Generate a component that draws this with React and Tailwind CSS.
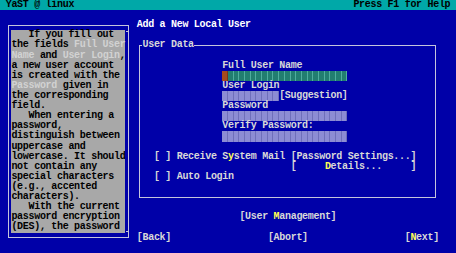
import React from "react";

function Field({ n, kind, cursor }) {
  const cells = Array.from({ length: n });
  return (
    <div className="flex h-[10.12px]">
      {cells.map((_, i) => {
        if (cursor && i === 0)
          return <span key={i} className="block w-[5.7px] h-full bg-[#a44a1c] border-r border-[#7a3414]" />;
        if (kind === "teal")
          return <span key={i} className="block w-[5.7px] h-full bg-[#227e70] border-r border-[#4fae9e]" />;
        return <span key={i} className="block w-[5.7px] h-full bg-[#8c8cd4] border-r border-[#6e6eba]" />;
      })}
    </div>
  );
}

const H = ({ children }) => <span className="text-[#d2d2d2]">{children}</span>;
const K = ({ children }) => <span className="text-[#ffff55]">{children}</span>;

const helpLines = [
  <>{"   If you fill out"}</>,
  <>{"the fields "}<H>Full User</H></>,
  <><H>Name</H>{" and "}<H>User Login</H>{","}</>,
  <>{"a new user account"}</>,
  <>{"is created with the"}</>,
  <><H>Password</H>{" given in"}</>,
  <>{"the corresponding"}</>,
  <>{"field."}</>,
  <>{"   When entering a"}</>,
  <>{"password,"}</>,
  <>{"distinguish between"}</>,
  <>{"uppercase and"}</>,
  <>{"lowercase. It should"}</>,
  <>{"not contain any"}</>,
  <>{"special characters"}</>,
  <>{"(e.g., accented"}</>,
  <>{"characters)."}</>,
  <>{"   With the current"}</>,
  <>{"password encryption"}</>,
  <>{"(DES), the password"}</>,
];

export default function App() {
  return (
    <div
      className="w-[456px] h-[253px] overflow-hidden bg-[#0000a8] text-[#d8d8d8] font-bold text-[10px] leading-[10.12px] tracking-[-0.3px] whitespace-pre flex flex-col"
      style={{ fontFamily: '"Liberation Mono", "DejaVu Sans Mono", monospace' }}
    >
      {/* title bar */}
      <div className="h-[10.12px] shrink-0 bg-[#00a8a8] text-black flex justify-between px-[5.7px]">
        <span>YaST @ linux</span>
        <span>Press F1 for Help</span>
      </div>

      <div className="flex items-start">
        {/* help panel */}
        <div className="relative mt-[14.9px] ml-[8px] w-[121px] border border-[#c4c4dc] pl-[2.4px] pr-[2.6px] pt-[4.36px] pb-[4.7px]">
          <div className="bg-[#a8a8a8] text-black h-[202.4px]">
            {helpLines.map((l, i) => (
              <div key={i} className="h-[10.12px]">{l}</div>
            ))}
          </div>
          <span className="absolute right-[-1px] top-[5px] w-[3px] h-px bg-[#c4c4dc]" />
          <span className="absolute right-[-1px] bottom-[5px] w-[3px] h-px bg-[#c4c4dc]" />
        </div>

        {/* main area */}
        <div className="ml-[7.8px] mt-[10.12px] flex flex-col">
          <div className="h-[10.12px] text-white">Add a New Local User</div>

          {/* frame */}
          <div className="relative mt-[14.64px] ml-[2.4px] w-[297.3px] h-[152.8px] border border-[#c4c4dc] pl-[2.3px] pt-[4.6px]">
            <span className="absolute left-[2.3px] top-[-5.6px] h-[10.12px] bg-[#0000a8] text-[#d8d8d8]">User Data</span>

            <div className="h-[10.12px]" />
            <div className="ml-[79.8px] flex flex-col">
              <div className="h-[10.12px]">Full User Name</div>
              <Field n={22} kind="teal" cursor />
              <div className="h-[10.12px]">User Login</div>
              <div className="flex">
                <Field n={10} kind="gray" />
                <span className="h-[10.12px]">[Suggestion]</span>
              </div>
              <div className="h-[10.12px]">Password</div>
              <Field n={22} kind="gray" />
              <div className="h-[10.12px]">Verify Password:</div>
              <Field n={22} kind="gray" />
            </div>
            <div className="h-[10.12px]" />
            <div className="flex h-[10.12px] ml-[11.4px]">
              <span>{"[ ] Receive S"}<K>y</K>{"stem Mail "}</span>
              <span>[Password Settings...]</span>
            </div>
            <div className="h-[10.12px] ml-[148.2px]">
              {"[     "}<K>D</K>{"etails...     ]"}
            </div>
            <div className="h-[10.12px] ml-[11.4px]">[ ] Auto Login</div>
          </div>

          <div className="mt-[14.72px] h-[10.12px] ml-[102.6px]">
            {"[User "}<K>M</K>{"anagement]"}
          </div>
          <div className="h-[10.12px]" />
          <div className="h-[10.12px] flex">
            <span className="w-[131.1px]">[Back]</span>
            <span className="w-[136.8px]">[Abort]</span>
            <span>{"["}<K>N</K>{"ext]"}</span>
          </div>
        </div>
      </div>
    </div>
  );
}
